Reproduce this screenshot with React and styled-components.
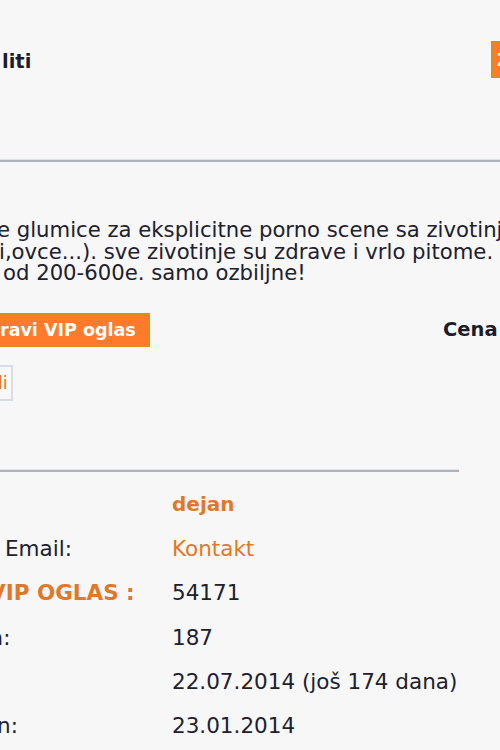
import React from "react";
import styled, { createGlobalStyle } from "styled-components";

const GlobalStyle = createGlobalStyle`
  html, body {
    margin: 0;
    padding: 0;
    background: #f7f7f7;
    overflow: hidden;
  }
  body {
    font-family: "DejaVu Sans", Verdana, sans-serif;
    color: #20202e;
  }
`;

const Page = styled.div`
  width: 620px;
  height: 750px;
  overflow: hidden;
  display: flex;
  flex-direction: column;
`;

const Header = styled.header`
  display: grid;
  grid-template-columns: 491px auto;
  align-items: center;
  margin-top: 41px;
  height: 37px;
`;

const Title = styled.h1`
  margin: 3px 0 0 2px;
  font-size: 19.5px;
  font-weight: bold;
  color: #1c1c2a;
  white-space: nowrap;
`;

const OrangeButton = styled.button`
  box-sizing: border-box;
  height: ${(p) => p.$h}px;
  margin-left: ${(p) => p.$shift || 0}px;
  padding: 0 ${(p) => p.$pad}px 0 ${(p) => p.$padLeft ?? p.$pad}px;
  background: #ff7a2b;
  border: 2px solid #dd8c1d;
  color: #fff;
  font-family: "DejaVu Sans", Verdana, sans-serif;
  font-size: 17.5px;
  font-weight: bold;
  white-space: nowrap;
  justify-self: start;
  cursor: pointer;
`;

const Divider = styled.hr`
  margin: ${(p) => p.$top}px 0 0 0;
  width: ${(p) => p.$w}px;
  height: 2px;
  border: 0;
  background: #aeb2bf;
  box-shadow: 0 -1px 0 #dfe2e8;
`;

const Description = styled.div`
  margin-top: 57px;
  font-size: 21.2px;
  line-height: 21.6px;
  white-space: nowrap;
`;

const DescLine = styled.div`
  margin-left: ${(p) => p.$shift || 0}px;
`;

const ActionRow = styled.div`
  display: grid;
  grid-template-columns: 443px auto;
  align-items: center;
  margin-top: 29px;
`;

const PriceLabel = styled.span`
  font-size: 19.5px;
  font-weight: bold;
  color: #1c1c2a;
`;

const GhostButton = styled.button`
  box-sizing: border-box;
  align-self: flex-start;
  height: 36px;
  margin: 18px 0 0 -8px;
  padding: 0 3px 0 4px;
  background: #f8f8f8;
  border: 2px solid #d6dce8;
  color: #e0782a;
  font-family: "DejaVu Sans", Verdana, sans-serif;
  font-size: 17.5px;
  cursor: pointer;
`;

const InfoTable = styled.div`
  margin-top: 10px;
  display: flex;
  flex-direction: column;
`;

const InfoRow = styled.div`
  display: grid;
  grid-template-columns: 172px auto;
  align-items: center;
  height: 44.4px;
  white-space: nowrap;
`;

const Label = styled.span`
  margin-left: ${(p) => p.$shift || 0}px;
  font-size: 21.5px;
  font-weight: ${(p) => (p.$accent ? "bold" : "normal")};
  color: ${(p) => (p.$accent ? "#e0782a" : "#20202e")};
`;

const Value = styled.span`
  font-size: ${(p) => (p.$bold ? "20px" : "21.5px")};
  font-weight: ${(p) => (p.$bold ? "bold" : "normal")};
  color: ${(p) => (p.$link ? "#e0782a" : "#20202e")};
`;

const rows = [
  { label: "", value: "dejan", bold: true, link: true },
  { label: "Email:", shift: 5, value: "Kontakt", link: true },
  { label: "VIP OGLAS :", shift: -11, accent: true, value: "54171" },
  { label: "a:", shift: -10, value: "187" },
  { label: "", value: "22.07.2014 (još 174 dana)" },
  { label: "n:", shift: -3, value: "23.01.2014" },
];

export default function App() {
  return (
    <>
      <GlobalStyle />
      <Page>
        <Header>
          <Title>liti</Title>
          <OrangeButton $h={37} $pad={6} $padLeft={4}>
            Zatvori
          </OrangeButton>
        </Header>
        <Divider $top={82} $w={620} />
        <Description>
          <DescLine $shift={-3}>e glumice za eksplicitne porno scene sa zivotinj</DescLine>
          <DescLine $shift={-1}>i,ovce...). sve zivotinje su zdrave i vrlo pitome.</DescLine>
          <DescLine $shift={3}> od 200-600e. samo ozbiljne!</DescLine>
        </Description>
        <ActionRow>
          <OrangeButton $h={34} $pad={12} $shift={-14}>
            ravi VIP oglas
          </OrangeButton>
          <PriceLabel>Cena</PriceLabel>
        </ActionRow>
        <GhostButton>li</GhostButton>
        <Divider $top={69} $w={459} />
        <InfoTable>
          {rows.map((r, i) => (
            <InfoRow key={i}>
              <Label $shift={r.shift} $accent={r.accent}>
                {r.label}
              </Label>
              <Value $bold={r.bold} $link={r.link}>
                {r.value}
              </Value>
            </InfoRow>
          ))}
        </InfoTable>
      </Page>
    </>
  );
}
